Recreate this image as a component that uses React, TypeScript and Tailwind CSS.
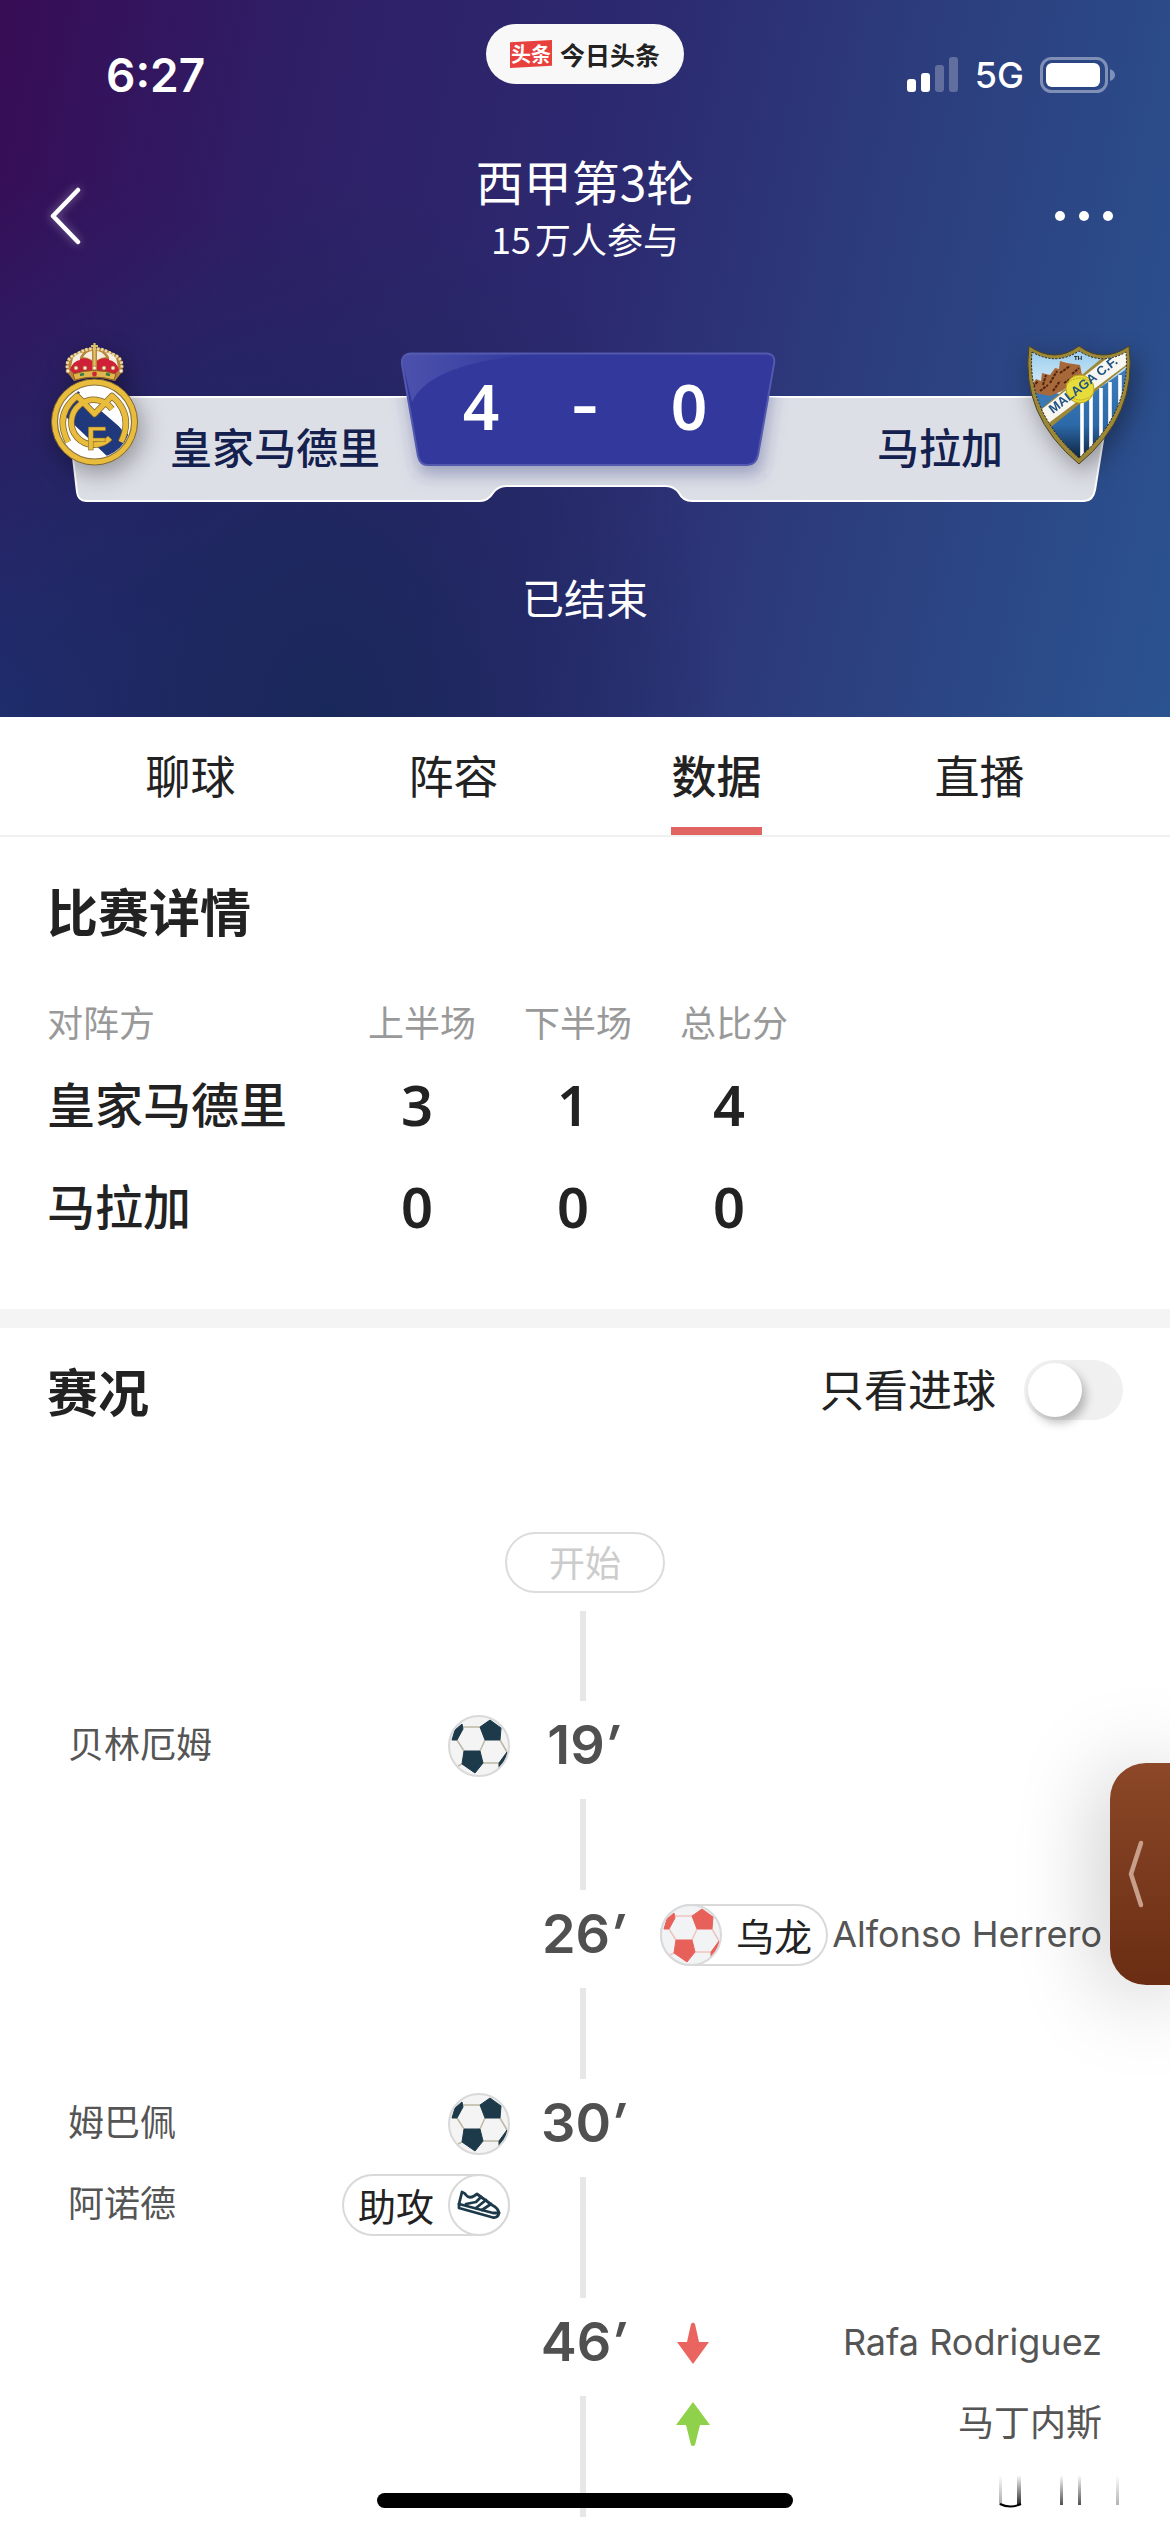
import React, { useState } from "react";

const CJK = "font-['Noto_Sans_CJK_SC',sans-serif]";

function MadridCrest() {
  return (
    <svg viewBox="0 0 89 124" className="h-[124px] w-[89px] shrink-0 drop-shadow-[4px_8px_12px_rgba(0,0,0,0.35)]" role="img" aria-label="皇家马德里队徽">
      <defs>
        <clipPath id="rm-disc"><circle cx="44.500" cy="79" r="36" /></clipPath>
      </defs>
      {/* crown */}
      <path d="M17 29 Q14 14 26 10 Q44 -1 63 10 Q75 14 72 29 L65 38 Q44 31 24 38Z" fill="#b8863b" />
      <path d="M20 27 Q22 18 30 16 Q37 14 42 18 V29 L24 31Z M69 27 Q67 18 59 16 Q52 14 47 18 V29 L65 31Z" fill="#cf2038" />
      <path d="M23 15 Q29 9 33 10 Q29 14 30 17 Q24 18 21 24Z M66 15 Q60 9 56 10 Q60 14 59 17 Q65 18 68 24Z" fill="#f5efe2" />
      <path d="M33 14 Q37 8 42 8 V17 Q37 14 33 14Z M56 14 Q52 8 47 8 V17 Q52 14 56 14Z" fill="#f5efe2" />
      <path d="M18 29 Q14 15 27 11 Q44 0 62 11 Q75 15 71 29" fill="none" stroke="#ead9a0" strokeWidth="3" strokeDasharray="2.500 1.500" />
      <path d="M44.500 0 V30 M41 3 H48" stroke="#dcc06c" strokeWidth="2.200" />
      <path d="M23 31 Q44 24 66 31 L64 37 Q44 31 25 37Z" fill="#e0b64c" stroke="#8a5d1f" />
      <path d="M30 32 l4 -1 M56 31 l4 1" stroke="#2f7a48" strokeWidth="2.500" />
      <circle cx="44.500" cy="31" r="2.400" fill="#c92638" />
      {[18, 26, 35, 44.5, 54, 63, 71].map((x) => (
        <circle key={x} cx={x} cy={x < 20 || x > 70 ? 28 : 25} r="2" fill="#f8f0d8" stroke="#a8742c" strokeWidth="0.700" />
      ))}
      {/* disc */}
      <circle cx="44.500" cy="79" r="43" fill="#e9bc3c" stroke="#7c6430" />
      <circle cx="44.500" cy="79" r="37" fill="#fff" stroke="#8a7440" strokeWidth="1.200" />
      <g clipPath="url(#rm-disc)">
        <path d="M14 72 L28 48 L86 98 L60 116Z" fill="#20387c" />
        <path d="M27 52 L44 40 L62 52 L44.500 68Z" fill="#fff" />
        <path d="M52 62 L62 54 L82 80 L76 92Z" fill="#fff" />
      </g>
      <g fill="none" strokeLinejoin="round">
        <path d="M18 99 Q4 72 27 53 L44.500 71 L62 53 Q84 72 71 99" stroke="#7c6430" strokeWidth="6.500" />
        <path d="M62 66 A22.500 22.500 0 1 0 60 95" stroke="#7c6430" strokeWidth="6.500" />
        <path d="M18 99 Q4 72 27 53 L44.500 71 L62 53 Q84 72 71 99" stroke="#e9bc3c" strokeWidth="5" />
        <path d="M62 66 A22.500 22.500 0 1 0 60 95" stroke="#e9bc3c" strokeWidth="5" />
      </g>
      <text x="36" y="107" fontSize="34" fontWeight="700" fontFamily="Liberation Sans, sans-serif" fill="#e9bc3c" stroke="#7c6430" strokeWidth="0.500">F</text>
    </svg>
  );
}

function MalagaCrest() {
  return (
    <svg viewBox="0 0 106 120" className="h-[120px] w-[106px] shrink-0 drop-shadow-[4px_8px_12px_rgba(0,0,0,0.35)]" role="img" aria-label="马拉加队徽">
      <defs>
        <clipPath id="mal-shield">
          <path d="M6 7 Q30 21 53 6 Q76 21 100 7 Q105 67 53 113 Q1 67 6 7Z" />
        </clipPath>
        <linearGradient id="mal-sky" x1="0" y1="0" x2="0" y2="1">
          <stop offset="0" stopColor="#8fc8ec" /><stop offset="1" stopColor="#f4fafd" />
        </linearGradient>
        <linearGradient id="mal-blue" x1="0" y1="0" x2="0" y2="1">
          <stop offset="0" stopColor="#3d7fc0" /><stop offset="0.600" stopColor="#2c69a8" /><stop offset="1" stopColor="#08162c" />
        </linearGradient>
      </defs>
      <path d="M3 1 Q29 19 53 1 Q77 19 103 1 Q112 70 53 119 Q-6 70 3 1Z" fill="#9c8838" stroke="#4a4220" />
      <g clipPath="url(#mal-shield)">
        <rect width="106" height="60" fill="url(#mal-sky)" />
        <path d="M4 46 Q18 42 40 52 L20 66 L8 62Z" fill="#3b78b4" />
        <path d="M6 40 L10 34 L15 36 L16 28 L24 30 L29 23 L33 24 L34 16 L41 18 L54 20 L56 30 L36 46 L24 51 L10 48Z" fill="#a8693a" />
        <path d="M7 42 L12 36 M17 40 L20 30 M24 38 L31 26 M34 28 L44 21 M46 29 L53 23 M14 46 L22 40 M27 46 L34 36 M38 38 L46 33" stroke="#4d230c" strokeWidth="2" strokeDasharray="3 1" />
        <path d="M18 82 L106 20 V120 H10Z" fill="url(#mal-blue)" />
        <path d="M56 56 V120 M65 50 V112 M75 43 V106 M84 37 V96 M94 30 V80" stroke="#fff" strokeWidth="3.600" />
        <path d="M8 70 L94 -2 L112 12 L20 86Z" fill="#9c8838" />
        <path d="M11 68 L98 0 L108 14 L20 80Z" fill="#f8f6f0" />
        <circle cx="54" cy="44" r="14" fill="#e8dc3c" stroke="#b8a420" />
        <path d="M42 38 Q54 28 66 38 M42 50 Q54 60 66 50" fill="none" stroke="#b8a420" strokeDasharray="2 1" />
        <text transform="translate(27 69) rotate(-38)" fontSize="13" fontWeight="700" fontFamily="Liberation Sans, sans-serif" fill="#1f5384">MALAGA C.F.</text>
      </g>
      <path d="M6 7 Q30 21 53 6 Q76 21 100 7 Q105 67 53 113 Q1 67 6 7Z" fill="none" stroke="#1f1f1f" strokeDasharray="2 1.500" />
      <text x="48" y="15" fontSize="6" fontWeight="700" fontFamily="Liberation Sans, sans-serif" fill="#111">TH</text>
    </svg>
  );
}

function Ball({ red = false }: { red?: boolean }) {
  const dark = red ? "#e8605a" : "#1d3a4a";
  return (
    <svg viewBox="0 0 62 62" className="h-[62px] w-[62px] shrink-0" aria-hidden="true">
      <circle cx="31" cy="31" r="30" fill={red ? "#f1f3f5" : "#f4f4f4"} />
      <path d="M15 12 H32 M9 25 L16 36 M37 25 L32 36 M52 25 L59 37 M35 48 H51 M14 49 L10 51" stroke={red ? "#efc3bf" : "#bdb8a4"} strokeWidth="1.500" fill="none" />
      <path d="M32 12 L42 5 L53 13 L52 25 L37 25Z M16 36 L32 36 L35 48 L27 58 L14 49Z M4 25 L9 25 L15 14 L14 9 L7 15Z M59 37 L51 48 L51 53 L57 46Z" fill={dark} stroke={dark} strokeLinejoin="round" />
      <circle cx="31" cy="31" r="30" fill="none" stroke="#d9d9d9" strokeWidth="2" />
    </svg>
  );
}

function Shoe() {
  return (
    <svg viewBox="0 0 62 62" className="h-[62px] w-[62px] shrink-0" aria-hidden="true">
      <circle cx="31" cy="31" r="30" fill="#fff" stroke="#d9d9d9" strokeWidth="2" />
      <g fill="none" stroke="#1d3a4a" strokeWidth="2.800" strokeLinejoin="round" strokeLinecap="round">
        <path d="M14 18 L11 30 L11 34 L45 43.500 Q50 44 51 39 Q50 34 44 31 L29 20 L26 22 Q21 25 18 21 Q17 19 14 18Z" />
        <path d="M11 30 L45 39 H51" />
        <path d="M33 23 L28 28 L18 30 M38 26 L28 34 M43 30 L34 36" />
      </g>
    </svg>
  );
}

function Arrow({ up = false }: { up?: boolean }) {
  return (
    <svg viewBox="0 0 34 44" className="ml-[16px] h-[44px] w-[34px] shrink-0" role="img" aria-label={up ? "换上" : "换下"}>
      {up ? (
        <path d="M17 0 L34 23 H24 L19 43 Q17 45 15 43 L10 23 H0Z" fill="#8fd14a" />
      ) : (
        <path d="M17 43 L33 21 H23 L19 3 Q17 0 15 3 L11 21 H1Z" fill="#ea6460" />
      )}
    </svg>
  );
}

function Tag({ label, kind }: { label: string; kind: "own" | "assist" }) {
  return (
    <span className="flex h-[62px] w-[168px] items-center justify-between rounded-full bg-white text-[38px] leading-none text-[#222] ring-2 ring-[#d9d9d9] ring-inset">
      {kind === "own" && <Ball red />}
      <span className={kind === "own" ? "pr-[16px]" : "pl-[16px]"}>{label}</span>
      {kind === "assist" && <Shoe />}
    </span>
  );
}

type Entry = { name: string; icon: React.ReactNode };
type MatchEvent = { minute: number; side: "home" | "away"; goal: boolean; entries: Entry[] };

const events: MatchEvent[] = [
  { minute: 19, side: "home", goal: true, entries: [{ name: "贝林厄姆", icon: <Ball /> }] },
  { minute: 26, side: "away", goal: true, entries: [{ name: "Alfonso Herrero", icon: <Tag label="乌龙" kind="own" /> }] },
  { minute: 30, side: "home", goal: true, entries: [
    { name: "姆巴佩", icon: <Ball /> },
    { name: "阿诺德", icon: <Tag label="助攻" kind="assist" /> },
  ] },
  { minute: 46, side: "away", goal: false, entries: [
    { name: "Rafa Rodriguez", icon: <Arrow /> },
    { name: "马丁内斯", icon: <Arrow up /> },
  ] },
];

function Side({ event, side }: { event: MatchEvent; side: "home" | "away" }) {
  return (
    <div className="flex flex-col gap-[19px] pt-[14px] pb-[62px]">
      {event.side === side && event.entries.map((e) => (
        <div key={e.name} className={side === "home" ? "flex h-[62px] items-center justify-between pr-[2px] pl-[4px]" : "flex h-[62px] flex-row-reverse items-center justify-between pl-[6px]"}>
          <span className="pb-[2px] font-['Inter','Noto_Sans_CJK_SC',sans-serif] text-[36px] leading-none whitespace-nowrap text-[#555]">{e.name}</span>
          {e.icon}
        </div>
      ))}
    </div>
  );
}

const tabs = ["聊球", "阵容", "数据", "直播"];

export default function App() {
  const [tab, setTab] = useState("数据");
  const [goalsOnly, setGoalsOnly] = useState(false);
  const shown = goalsOnly ? events.filter((e) => e.goal) : events;

  return (
    <main className={"relative min-h-screen overflow-hidden bg-white text-[#222] " + CJK}>
      <header className="bg-[radial-gradient(ellipse_34%_75%_at_28%_100%,#19285a_0%,rgba(25,40,90,0)_100%),radial-gradient(ellipse_40%_75%_at_0%_100%,#1f2e70_0%,rgba(31,46,112,0)_100%),linear-gradient(102deg,#370c55_0%,#2f1e66_22%,#2c2a70_50%,#2c3c7c_70%,#2b5390_100%)] pb-[90px] text-white">
        <div className="grid h-[147px] grid-cols-3">
          <span className="pt-[52px] pl-[106px] font-['Inter',sans-serif] text-[46px] leading-none font-semibold">6:27</span>
          <div className="mt-[24px] flex h-[60px] w-[198px] items-center justify-center gap-[8px] justify-self-center rounded-full bg-[#f8f8f8]">
            <span className="bg-[#e8413d] px-[1px] text-[20px] leading-[28px] font-bold [clip-path:polygon(0_8%,100%_0,100%_92%,0_100%)]">头条</span>
            <span className="text-[25px] leading-none font-bold text-[#222]">今日头条</span>
          </div>
          <div className="flex items-center justify-end gap-[16px] pt-[2px] pr-[55px]">
            <svg viewBox="0 0 52 36" className="h-[36px] w-[52px]" aria-label="信号" role="img">
              <rect x="0" y="22" width="9" height="13" rx="3" fill="#fff" />
              <rect x="14" y="16" width="9" height="19" rx="3" fill="#fff" />
              <rect x="28" y="8" width="9" height="27" rx="3" fill="#fff" fillOpacity="0.25" />
              <rect x="42" y="0" width="9" height="35" rx="3" fill="#fff" fillOpacity="0.25" />
            </svg>
            <span className="font-['Inter',sans-serif] text-[36px] leading-none font-medium">5G</span>
            <svg viewBox="0 0 75 36" className="h-[36px] w-[75px]" aria-label="电量" role="img">
              <rect x="1.500" y="1.500" width="65" height="33" rx="10" fill="none" stroke="#fff" strokeOpacity="0.4" strokeWidth="3" />
              <rect x="6" y="6" width="54" height="24" rx="6" fill="#fff" />
              <path d="M70 12 Q75 14 75 18 Q75 22 70 24Z" fill="#fff" fillOpacity="0.4" />
            </svg>
          </div>
        </div>

        <div className="grid h-[135px] grid-cols-[1fr_auto_1fr] items-center">
          <button aria-label="返回" className="mt-[3px] ml-[46px] h-[66px] w-[40px] drop-shadow-[0_0_5px_rgba(255,255,255,0.4)]">
            <svg viewBox="0 0 40 66" className="h-full w-full"><path d="M32 7 L7 33 L32 59" fill="none" stroke="#fff" strokeWidth="4.500" strokeLinecap="round" strokeLinejoin="round" /></svg>
          </button>
          <div className="self-start text-center">
            <h1 className="text-[48px] leading-[66px] font-normal">西甲第3轮</h1>
            <p className="text-[36px] leading-[50px]"><span className="mr-[4px]">15</span>万人参与</p>
          </div>
          <button aria-label="更多" className="mt-[3px] mr-[57px] flex h-[40px] items-center gap-[14px] justify-self-end">
            <span className="h-[10px] w-[10px] rounded-full bg-white" />
            <span className="h-[10px] w-[10px] rounded-full bg-white" />
            <span className="h-[10px] w-[10px] rounded-full bg-white" />
          </button>
        </div>

        <section className="relative mt-[58px] h-[170px]" aria-label="比分">
          <svg viewBox="0 0 1170 170" preserveAspectRatio="none" className="absolute inset-0 h-full w-full" aria-hidden="true">
            <defs>
              <filter id="soft" x="-10%" y="-20%" width="120%" height="160%"><feGaussianBlur stdDeviation="9" /></filter>
              <linearGradient id="sheen" x1="0" y1="0" x2="1" y2="0">
                <stop offset="0" stopColor="#6a70c0" stopOpacity="0.45" /><stop offset="1" stopColor="#6a70c0" stopOpacity="0" />
              </linearGradient>
              <clipPath id="bar">
                <path d="M66 57 H1110 L1095 150 Q1093 161 1084 161 H692 Q683 161 679 153 Q674 146 666 146 H506 Q498 146 493 153 Q488 161 480 161 H86 Q78 161 77 152Z" />
              </clipPath>
            </defs>
            <path d="M66 57 H1110 L1095 150 Q1093 161 1084 161 H692 Q683 161 679 153 Q674 146 666 146 H506 Q498 146 493 153 Q488 161 480 161 H86 Q78 161 77 152Z" fill="#dddfe7" stroke="#fff" strokeWidth="2" />
            <g clipPath="url(#bar)">
              <path d="M402 20 H776 L760 134 H420Z" fill="#30347c" fillOpacity="0.4" filter="url(#soft)" />
            </g>
            <path d="M411 13.500 H766 Q776 14 774 24 L758 115 Q756 125 747 125 H428 Q420 125 418 116 L402 24 Q401 14 411 13.500Z" fill="#32389c" stroke="#5359ae" strokeWidth="2" />
            <path d="M411 14 H540 Q430 22 412 62 L403 24 Q402 15 411 14Z" fill="url(#sheen)" />
          </svg>
          <div className="relative grid h-full grid-cols-[1fr_312px_1fr]">
            <div className="flex items-start pt-[3px] pl-[50px]">
              <MadridCrest />
              <span className="pt-[73px] pl-[31px] text-[42px] leading-[60px] font-medium whitespace-nowrap text-[#14204e]">皇家马德里</span>
            </div>
            <div className="grid grid-cols-3 pt-[28px] text-center font-['Noto_Sans',sans-serif] text-[64px] leading-[76px] font-semibold">
              <span>4</span><span className="font-['Inter',sans-serif]">-</span><span>0</span>
            </div>
            <div className="flex items-start justify-end pt-[5px] pr-[38px]">
              <span className="pt-[71px] pr-[23px] text-[42px] leading-[60px] font-medium whitespace-nowrap text-[#14204e]">马拉加</span>
              <MalagaCrest />
            </div>
          </div>
        </section>
        <p className="mt-[57px] text-center text-[42px] leading-[60px]">已结束</p>
      </header>

      <nav className="grid grid-cols-4 border-b-2 border-[#f0f0f0] px-[59px]">
        {tabs.map((t) => (
          <button key={t} onClick={() => setTab(t)} aria-current={tab === t ? "page" : undefined} className="flex flex-col items-center text-[45px] leading-[60px]">
            <span className={tab === t ? "border-b-8 border-[#e06461] pt-[28px] pb-[22px] font-medium" : "border-b-8 border-transparent pt-[28px] pb-[22px]"}>{t}</span>
          </button>
        ))}
      </nav>

      <section className="px-[47px] pt-[40px] pb-[54px]">
        <h2 className="text-[51px] leading-[66px] font-bold">比赛详情</h2>
        <table className="mt-[47px] table-fixed text-left">
          <thead>
            <tr className="h-[61px] text-[36px] leading-[52px] text-[#999]">
              <th scope="col" className="w-[321px] font-normal">对阵方</th>
              <th scope="col" className="w-[156px] font-normal">上半场</th>
              <th scope="col" className="w-[156px] font-normal">下半场</th>
              <th scope="col" className="w-[156px] font-normal">总比分</th>
            </tr>
          </thead>
          <tbody>
            {[["皇家马德里", 3, 1, 4], ["马拉加", 0, 0, 0]].map((row) => (
              <tr key={row[0]} className="h-[102px]">
                <th scope="row" className="text-[48px] leading-[60px] font-medium">{row[0]}</th>
                {row.slice(1).map((n, i) => (
                  <td key={i} className="pt-[4px] pl-[33px] font-['Noto_Sans',sans-serif] text-[56px] leading-[60px] font-semibold">{n}</td>
                ))}
              </tr>
            ))}
          </tbody>
        </table>
      </section>

      <div className="h-[19px] bg-[#f4f4f4]" />

      <section className="pt-[29px]">
        <div className="flex items-center justify-between px-[47px]">
          <h2 className="text-[51px] leading-[66px] font-bold">赛况</h2>
          <label className="flex cursor-pointer items-center gap-[28px] text-[44px] leading-[60px]">
            <span className="pb-[4px]">只看进球</span>
            <input
              type="checkbox"
              role="switch"
              checked={goalsOnly}
              onChange={(e) => setGoalsOnly(e.target.checked)}
              className="flex h-[60px] w-[99px] appearance-none items-center rounded-full bg-[#f0f0f0] px-[4px] before:h-[54px] before:w-[54px] before:rounded-full before:bg-white before:shadow-[4px_6px_10px_rgba(0,0,0,0.25)] checked:justify-end checked:bg-[#e06461]"
            />
          </label>
        </div>

        <div className="mt-[109px] flex justify-center">
          <span className="flex h-[61px] w-[160px] items-center justify-center rounded-full border-2 border-[#dcdcdc] pb-[4px] text-[36px] leading-none text-[#ccc]">开始</span>
        </div>

        <ol className="mt-[18px] pr-[68px] pl-[64px]">
          <li className="grid grid-cols-[1fr_142px_1fr]"><span className="col-start-2 h-[90px] w-[6px] justify-self-center bg-[#e7e7e7]" /></li>
          {shown.map((event) => (
            <li key={event.minute} className="grid grid-cols-[1fr_142px_1fr]">
              <Side event={event} side="home" />
              <div className="flex flex-col items-center">
                <time className="h-[98px] font-['Inter',sans-serif] text-[54px] leading-[88px] font-semibold text-[#505050]">{event.minute}<span className="italic">′</span></time>
                <span className="min-h-[91px] w-[6px] flex-1 bg-[#e7e7e7]" />
              </div>
              <Side event={event} side="away" />
            </li>
          ))}
        </ol>
      </section>

      <button aria-label="展开" className="absolute top-[1763px] right-0 flex h-[222px] w-[60px] items-center rounded-l-[36px] bg-linear-to-b from-[#8c4828] to-[#6a2d13] pl-[18px] shadow-[0_8px_90px_rgba(0,0,0,0.28)]">
        <svg viewBox="0 0 16 68" className="h-[68px] w-[16px]"><path d="M13 3 L3 34 L13 65" fill="none" stroke="#c79f8b" strokeWidth="4.500" strokeLinecap="round" strokeLinejoin="round" /></svg>
      </button>

      <svg viewBox="0 0 220 36" className="absolute right-[16px] bottom-[21px] h-[36px] w-[220px]" aria-hidden="true">
        <defs>
          <linearGradient id="fade" x1="0" y1="0" x2="0" y2="1">
            <stop offset="0" stopColor="#000" stopOpacity="0" /><stop offset="1" stopColor="#000" stopOpacity="0.85" />
          </linearGradient>
        </defs>
        <g fill="url(#fade)">
          <rect x="65" y="0" width="3" height="30" fillOpacity="0.4" /><rect x="83" y="0" width="4" height="30" />
          <rect x="126" y="0" width="3" height="30" fillOpacity="0.8" /><rect x="144" y="0" width="3" height="30" fillOpacity="0.8" />
          <rect x="182" y="0" width="3" height="30" fillOpacity="0.35" />
        </g>
        <path d="M66 29 Q76 34 87 29" fill="none" stroke="#000" strokeWidth="2" />
      </svg>
      <div className="absolute bottom-[24px] left-1/2 h-[15px] w-[416px] -translate-x-1/2 rounded-full bg-black" />
    </main>
  );
}
